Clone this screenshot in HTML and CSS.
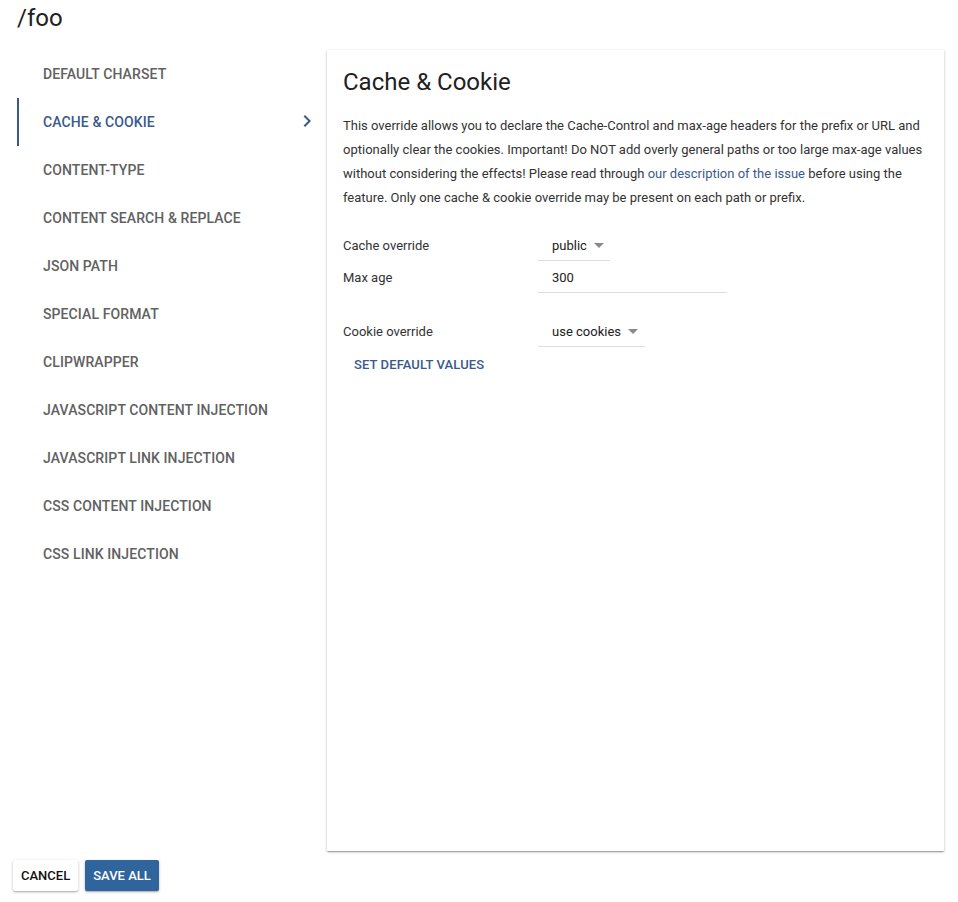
FILE: index.html
```html
<!DOCTYPE html>
<html>
<head>
<meta charset="utf-8">
<link rel="stylesheet" href="styles.css">
</head>
<body>
<div class="page">
  <h1 class="title">/foo</h1>
  <div class="main">
    <nav class="nav">
      <div class="nav-item">Default charset</div>
      <div class="nav-item active">Cache &amp; Cookie
        <svg class="chev" width="24" height="24" viewBox="0 0 24 24"><path d="M10 6L8.59 7.41 13.17 12l-4.58 4.59L10 18l6-6z" fill="currentColor"/></svg>
      </div>
      <div class="nav-item">Content-Type</div>
      <div class="nav-item">Content search &amp; replace</div>
      <div class="nav-item">JSON path</div>
      <div class="nav-item">Special format</div>
      <div class="nav-item">Clipwrapper</div>
      <div class="nav-item">JavaScript content injection</div>
      <div class="nav-item">JavaScript link injection</div>
      <div class="nav-item">CSS content injection</div>
      <div class="nav-item">CSS link injection</div>
    </nav>
    <section class="card">
      <h2 class="card-title">Cache &amp; Cookie</h2>
      <p class="desc">This override allows you to declare the Cache-Control and max-age headers for the prefix or URL and optionally clear the cookies. Important! Do NOT add overly general paths or too large max-age values without considering the effects! Please read through <a class="link">our description of the issue</a> before using the feature. Only one cache &amp; cookie override may be present on each path or prefix.</p>
      <div class="form">
        <div class="row">
          <div class="label">Cache override</div>
          <div class="field select w1"><span>public</span><span class="arrow"></span></div>
        </div>
        <div class="row">
          <div class="label">Max age</div>
          <div class="field w2"><span>300</span></div>
        </div>
        <div class="row gap">
          <div class="label">Cookie override</div>
          <div class="field select w3"><span>use cookies</span><span class="arrow"></span></div>
        </div>
        <button class="text-btn">Set default values</button>
      </div>
    </section>
  </div>
  <div class="actions">
    <button class="btn cancel">Cancel</button>
    <button class="btn save">Save all</button>
  </div>
</div>
</body>
</html>
```

FILE: styles.css
```css
* { box-sizing: border-box; }
html, body { margin: 0; padding: 0; background: #fff; }
body {
  font-family: Roboto, "Liberation Sans", Arial, sans-serif;
  color: #212121;
}
.page {
  width: 958px;
  height: 902px;
  display: flex;
  flex-direction: column;
}
.title {
  margin: 0;
  height: 50px;
  padding: 2px 0 0 17px;
  font-size: 24px;
  line-height: 32px;
  font-weight: 400;
  color: #212121;
}
.main {
  display: flex;
  height: 801px;
}
.nav {
  width: 310px;
  margin-left: 17px;
}
.nav-item {
  position: relative;
  height: 48px;
  display: flex;
  align-items: center;
  padding-left: 26px;
  font-size: 14px;
  font-weight: 500;
  text-transform: uppercase;
  color: #616161;
  letter-spacing: 0.1px;
}
.nav-item.active {
  color: #3b5a8c;
  border-left: 2px solid #3b5a8c;
  padding-left: 24px;
}
.chev {
  position: absolute;
  right: 8px;
  top: 11px;
  color: #3b5a8c;
}
.card {
  width: 617px;
  background: #fff;
  padding: 16px;
  box-shadow: 0 1px 3px rgba(0,0,0,0.2), 0 1px 1px rgba(0,0,0,0.14), 0 2px 1px -1px rgba(0,0,0,0.12);
}
.card-title {
  margin: 0;
  font-size: 24px;
  line-height: 32px;
  font-weight: 400;
  color: #212121;
}
.desc {
  margin: 16px 0 0;
  font-size: 13px;
  line-height: 24px;
  color: #333;
}
.link { color: #3b5a8c; }
.form { margin-top: 19px; }
.row {
  display: flex;
  height: 32px;
  align-items: stretch;
}
.row.gap { margin-top: 22px; }
.label {
  width: 195px;
  font-size: 13px;
  display: flex;
  align-items: center;
  padding-top: 1px;
  color: #333;
}
.field {
  border-bottom: 1px solid #dedede;
  padding-left: 14px;
  padding-top: 2px;
  font-size: 13px;
  display: flex;
  align-items: center;
  color: #212121;
}
.w1 { width: 72px; }
.w2 { width: 189px; }
.w3 { width: 107px; }
.arrow {
  width: 0; height: 0;
  margin-left: 7px;
  border-left: 5px solid transparent;
  border-right: 5px solid transparent;
  border-top: 5px solid #8a8a8a;
}
.text-btn {
  margin-top: -1px;
  height: 36px;
  padding: 0 11px;
  border: none;
  background: none;
  font-family: inherit;
  font-size: 13px;
  font-weight: 500;
  text-transform: uppercase;
  color: #3b5a8c;
  letter-spacing: 0.1px;
}
.actions {
  display: flex;
  gap: 7px;
  padding: 9px 0 0 13px;
}
.btn {
  height: 31px;
  border: none;
  border-radius: 2px;
  font-family: inherit;
  font-size: 13px;
  font-weight: 500;
  text-transform: uppercase;
  padding: 0 8px;
  box-shadow: 0 1px 3px rgba(0,0,0,0.25), 0 1px 1px rgba(0,0,0,0.14);
}
.cancel { width: 65px; background: #fff; color: #111; }
.save { width: 74px; background: #30649c; color: #fff; }
```
